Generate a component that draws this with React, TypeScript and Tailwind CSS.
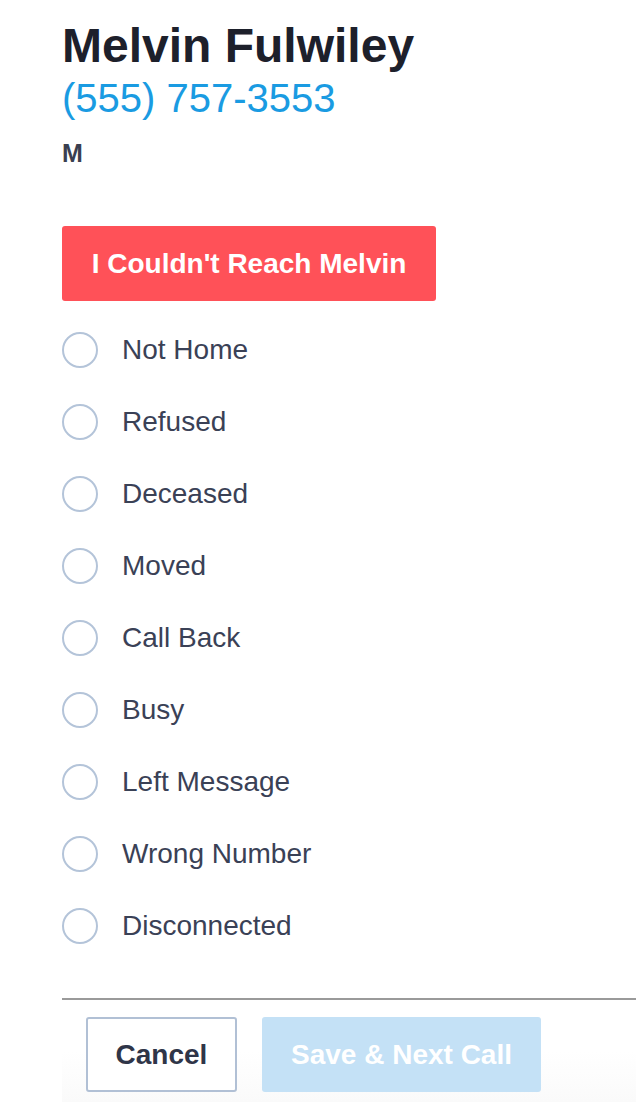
import { useState } from 'react'

const outcomes = [
  'Not Home',
  'Refused',
  'Deceased',
  'Moved',
  'Call Back',
  'Busy',
  'Left Message',
  'Wrong Number',
  'Disconnected',
]

export default function App() {
  const [selected, setSelected] = useState<string | null>(null)

  return (
    <div className="min-h-[1102px] bg-white pl-[62px] font-['Liberation_Sans',Arial,sans-serif]">
      <div className="pt-[18px]">
        <h1 className="text-[48px] leading-[56px] font-bold text-[#1d202b]">
          Melvin Fulwiley
        </h1>
        <div className="text-[40px] leading-[48px] text-[#1a9be2]">
          (555) 757-3553
        </div>
        <div className="mt-[17px] text-[25px] leading-[28px] font-bold text-[#3a3f50]">
          M
        </div>
      </div>

      <button className="mt-[59px] flex h-[75px] w-[374px] items-center justify-center rounded-[3px] bg-[#ff5158] text-[28px] font-bold text-white">
        I Couldn't Reach Melvin
      </button>

      <div className="mt-[13px] flex flex-col">
        {outcomes.map((o) => (
          <label
            key={o}
            className="flex h-[72px] cursor-pointer items-center gap-[24px]"
            onClick={() => setSelected(o)}
          >
            <span className="flex h-[36px] w-[36px] items-center justify-center rounded-full border-2 border-[#b4c4d9]">
              {selected === o && (
                <span className="h-[18px] w-[18px] rounded-full bg-[#1a9be2]" />
              )}
            </span>
            <span className="text-[28px] text-[#3a4156]">{o}</span>
          </label>
        ))}
      </div>

      <div className="mt-[36px] h-[2px] bg-[#9a9a9a]" />

      <div className="flex gap-[25px] bg-gradient-to-b from-white via-white to-[#fafafa] pt-[17px] pb-[10px] pl-[24px]">
        <button className="h-[75px] w-[151px] rounded-[3px] border-2 border-[#b1c0d5] bg-white text-[28px] font-bold text-[#2f3548]">
          Cancel
        </button>
        <button
          disabled={!selected}
          className="h-[75px] w-[279px] rounded-[3px] bg-[#c4e1f6] text-[28px] font-bold text-white"
        >
          Save &amp; Next Call
        </button>
      </div>
    </div>
  )
}
